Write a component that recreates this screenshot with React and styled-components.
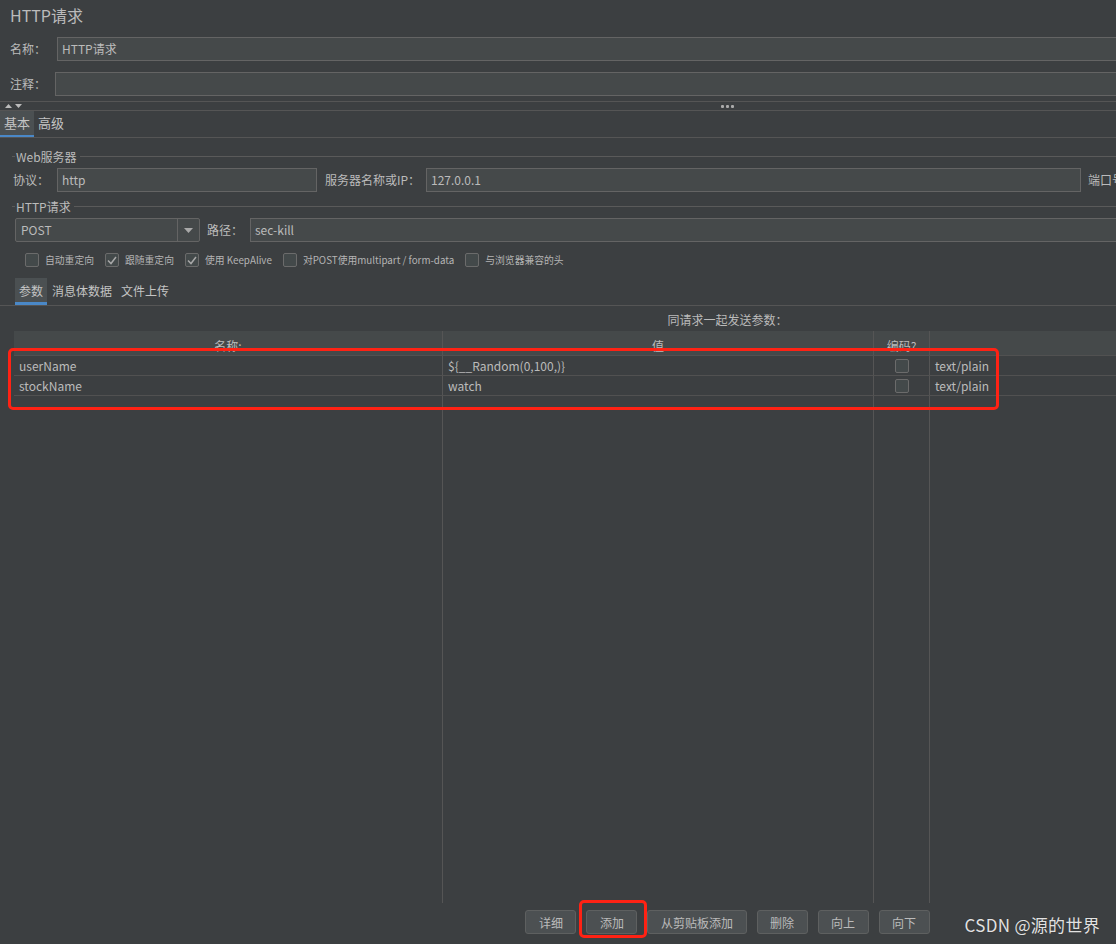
import React from "react";
import styled, { createGlobalStyle } from "styled-components";

const GlobalStyle = createGlobalStyle`
  html, body {
    margin: 0;
    padding: 0;
    background: #3c3f41;
    overflow: hidden;
  }
  body {
    font-family: "Noto Sans CJK SC", "Noto Sans", sans-serif;
    color: #bbbbbb;
  }
`;

const Screen = styled.div`
  position: relative;
  width: 1116px;
  height: 944px;
  overflow: hidden;
  background: #3c3f41;
`;

const Panel = styled.div`
  width: 1455px;
  height: 944px;
  display: flex;
  flex-direction: column;
`;

const Title = styled.div`
  height: 31px;
  line-height: 31px;
  padding-left: 10px;
  font-size: 16px;
  color: #bbbbbb;
`;

const FieldRow = styled.div`
  display: flex;
  align-items: center;
  height: 24px;
  margin-top: ${({ $top }) => $top}px;
  padding-left: ${({ $left }) => $left}px;
`;

const Label = styled.span`
  flex: none;
  font-size: 12px;
  line-height: 24px;
  white-space: nowrap;
  width: ${({ $w }) => ($w ? `${$w}px` : "auto")};
  margin-left: ${({ $ml }) => $ml || 0}px;
`;

const TextInput = styled.div`
  box-sizing: border-box;
  height: 24px;
  background: #45494a;
  border: 1px solid #646464;
  font-size: 12px;
  line-height: 22px;
  padding: 0 4px;
  color: #bbbbbb;
  white-space: nowrap;
  flex: ${({ $w }) => ($w ? "none" : "1")};
  width: ${({ $w }) => ($w ? `${$w}px` : "auto")};
`;

const Splitter = styled.div`
  position: relative;
  margin-top: 5px;
  height: 8px;
  border-top: 1px solid #555555;
  border-bottom: 1px solid #555555;
  display: flex;
  align-items: center;
  justify-content: center;
`;

const SplitArrows = styled.div`
  position: absolute;
  left: 5px;
  top: 2px;
  display: flex;
  gap: 3px;
`;

const Dots = styled.div`
  display: flex;
  gap: 2px;
  span {
    width: 3px;
    height: 3px;
    background: #aaaaaa;
    border-radius: 1px;
  }
`;

const TabBar = styled.div`
  display: flex;
  height: ${({ $h }) => $h || 26}px;
  border-bottom: 1px solid #555555;
  padding-left: ${({ $left }) => $left || 0}px;
  margin-top: ${({ $top }) => $top || 0}px;
`;

const Tab = styled.div`
  box-sizing: border-box;
  height: ${({ $h }) => $h || 26}px;
  padding: 0 ${({ $pad }) => $pad}px;
  font-size: ${({ $size }) => $size || 13}px;
  line-height: ${({ $h }) => ($h || 26) - 2}px;
  color: #c4c4c4;
  background: ${({ $active }) => ($active ? "#4b5052" : "transparent")};
  border-bottom: ${({ $line }) => $line || 2}px solid
    ${({ $active }) => ($active ? "#4a88c7" : "transparent")};
`;

const Legend = styled.div`
  display: flex;
  align-items: center;
  height: 14px;
  margin-top: ${({ $top }) => $top}px;
  padding-left: 12px;
  font-size: 12px;
  color: #bbbbbb;
  &::before {
    content: "";
    width: 3px;
    height: 1px;
    background: #5a5a5a;
    margin-right: 1px;
  }
  &::after {
    content: "";
    flex: 1;
    height: 1px;
    background: #5a5a5a;
    margin-left: 3px;
  }
`;

const Combo = styled.div`
  box-sizing: border-box;
  flex: none;
  width: 185px;
  height: 24px;
  display: flex;
  background: #45494a;
  border: 1px solid #646464;
  border-radius: 2px;
`;

const ComboValue = styled.div`
  flex: 1;
  font-size: 12px;
  line-height: 22px;
  padding-left: 5px;
`;

const ComboButton = styled.div`
  width: 21px;
  border-left: 1px solid #646464;
  display: flex;
  align-items: center;
  justify-content: center;
`;

const CheckRow = styled.div`
  display: flex;
  align-items: center;
  gap: 11px;
  height: 14px;
  margin-top: 11px;
  padding-left: 25px;
`;

const CheckItem = styled.label`
  display: flex;
  align-items: center;
  gap: 6px;
  font-size: 9.8px;
  color: #b4b4b4;
  white-space: nowrap;
`;

const Box = styled.span`
  box-sizing: border-box;
  width: 14px;
  height: 14px;
  flex: none;
  border: 1px solid #6b6b6b;
  border-radius: 2px;
  background: #43494a;
  display: flex;
  align-items: center;
  justify-content: center;
`;

const Caption = styled.div`
  height: 25px;
  padding-left: 14px;
  padding-right: 14px;
  text-align: center;
  font-size: 12px;
  line-height: 28px;
  color: #bbbbbb;
`;

const Table = styled.div`
  flex: 1;
  margin: 0 14px;
  display: grid;
  grid-template-columns: 429px 431px 56px 1fr;
  grid-template-rows: 25px 20px 20px 1fr;
`;

const HeadCell = styled.div`
  box-sizing: border-box;
  background: #45494a;
  border-bottom: 1px solid #515151;
  border-right: ${({ $last }) => ($last ? "none" : "1px solid #555555")};
  font-size: 12px;
  line-height: 30px;
  text-align: center;
  white-space: nowrap;
  overflow: hidden;
`;

const Cell = styled.div`
  box-sizing: border-box;
  border-bottom: ${({ $fill }) => ($fill ? "none" : "1px solid #515151")};
  border-right: ${({ $last }) => ($last ? "none" : "1px solid #555555")};
  font-size: 12px;
  line-height: 19px;
  padding-left: ${({ $center }) => ($center ? 0 : 5)}px;
  display: flex;
  align-items: center;
  justify-content: ${({ $center }) => ($center ? "center" : "flex-start")};
  color: #bbbbbb;
  white-space: nowrap;
`;

const ButtonBar = styled.div`
  height: 41px;
  display: flex;
  justify-content: center;
  align-items: flex-start;
  gap: 10px;
  padding-top: 7px;
  box-sizing: border-box;
`;

const Button = styled.button`
  height: 24px;
  padding: 0 12.5px;
  font-family: inherit;
  font-size: 12px;
  color: #bbbbbb;
  background: #4c5052;
  border: 1px solid #5e6060;
  border-radius: 3px;
`;

const Mark = styled.div`
  position: absolute;
  left: ${({ $x }) => $x}px;
  top: ${({ $y }) => $y}px;
  width: ${({ $w }) => $w}px;
  height: ${({ $h }) => $h}px;
  box-sizing: border-box;
  border: 3px solid #ff2214;
  border-radius: 5px;
  pointer-events: none;
`;

const Watermark = styled.div`
  position: absolute;
  right: 16px;
  top: 912px;
  font-size: 17px;
  color: #e2e2e2;
  letter-spacing: 0.3px;
  text-shadow: 0 0 1px rgba(0, 0, 0, 0.4);
`;

const Check = () => (
  <svg width="10" height="9" viewBox="0 0 10 9">
    <path d="M1 4.5 L4 7.5 L9 1" fill="none" stroke="#a8a8a8" strokeWidth="1.5" />
  </svg>
);

const CheckOption = ({ checked, children }) => (
  <CheckItem>
    <Box>{checked && <Check />}</Box>
    {children}
  </CheckItem>
);

const params = [
  { name: "userName", value: "${__Random(0,100,)}" },
  { name: "stockName", value: "watch" },
];

export default function App() {
  return (
    <Screen>
      <GlobalStyle />
      <Panel>
        <Title>HTTP请求</Title>
        <FieldRow $top={6} $left={10}>
          <Label $w={47}>名称：</Label>
          <TextInput>HTTP请求</TextInput>
        </FieldRow>
        <FieldRow $top={11} $left={10}>
          <Label $w={45}>注释：</Label>
          <TextInput />
        </FieldRow>
        <Splitter>
          <SplitArrows>
            <svg width="7" height="4" viewBox="0 0 7 4">
              <path d="M0 4 L3.5 0 L7 4 Z" fill="#bbbbbb" />
            </svg>
            <svg width="7" height="4" viewBox="0 0 7 4">
              <path d="M0 0 L7 0 L3.5 4 Z" fill="#bbbbbb" />
            </svg>
          </SplitArrows>
          <Dots>
            <span />
            <span />
            <span />
          </Dots>
        </Splitter>
        <TabBar>
          <Tab $active $pad={4}>基本</Tab>
          <Tab $pad={4}>高级</Tab>
        </TabBar>

        <Legend $top={11}>Web服务器</Legend>
        <FieldRow $top={5} $left={13}>
          <Label $w={44}>协议：</Label>
          <TextInput $w={260}>http</TextInput>
          <Label $w={101} $ml={8}>服务器名称或IP：</Label>
          <TextInput $w={655}>127.0.0.1</TextInput>
          <Label $w={52} $ml={7}>端口号：</Label>
          <TextInput $w={120} />
        </FieldRow>

        <Legend $top={7}>HTTP请求</Legend>
        <FieldRow $top={5} $left={15}>
          <Combo>
            <ComboValue>POST</ComboValue>
            <ComboButton>
              <svg width="9" height="5" viewBox="0 0 9 5">
                <path d="M0 0 L9 0 L4.5 5 Z" fill="#a9a9a9" />
              </svg>
            </ComboButton>
          </Combo>
          <Label $w={43} $ml={7}>路径：</Label>
          <TextInput>sec-kill</TextInput>
        </FieldRow>

        <CheckRow>
          <CheckOption>自动重定向</CheckOption>
          <CheckOption checked>跟随重定向</CheckOption>
          <CheckOption checked>使用 KeepAlive</CheckOption>
          <CheckOption>对POST使用multipart / form-data</CheckOption>
          <CheckOption>与浏览器兼容的头</CheckOption>
        </CheckRow>

        <TabBar $left={15} $top={11} $h={27}>
          <Tab $active $pad={4} $h={27} $line={3} $size={12}>参数</Tab>
          <Tab $pad={5} $h={27} $line={3} $size={12}>消息体数据</Tab>
          <Tab $pad={4} $h={27} $line={3} $size={12}>文件上传</Tab>
        </TabBar>

        <Caption>同请求一起发送参数：</Caption>
        <Table>
          <HeadCell>名称:</HeadCell>
          <HeadCell>值</HeadCell>
          <HeadCell>编码?</HeadCell>
          <HeadCell $last />
          {params.map((p) => (
            <React.Fragment key={p.name}>
              <Cell>{p.name}</Cell>
              <Cell>{p.value}</Cell>
              <Cell $center>
                <Box />
              </Cell>
              <Cell $last>text/plain</Cell>
            </React.Fragment>
          ))}
          <Cell $fill />
          <Cell $fill />
          <Cell $fill />
          <Cell $fill $last />
        </Table>

        <ButtonBar>
          <Button>详细</Button>
          <Button>添加</Button>
          <Button>从剪贴板添加</Button>
          <Button>删除</Button>
          <Button>向上</Button>
          <Button>向下</Button>
        </ButtonBar>
      </Panel>

      <Mark $x={8} $y={348} $w={991} $h={62} />
      <Mark $x={579} $y={900} $w={68} $h={38} />
      <Watermark>CSDN @源的世界</Watermark>
    </Screen>
  );
}
